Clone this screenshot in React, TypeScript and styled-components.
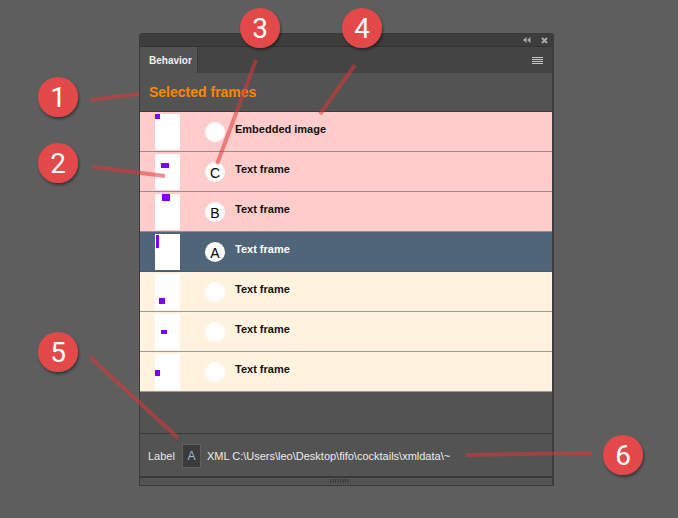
import React from "react";
import styled, { createGlobalStyle } from "styled-components";

const Global = createGlobalStyle`
  html, body { margin: 0; padding: 0; background: #5e5e5e; }
  body { font-family: "Liberation Sans", Arial, sans-serif; }
`;

const Page = styled.div`
  position: relative;
  width: 678px;
  height: 518px;
  padding: 33px 0 0 139px;
  box-sizing: border-box;
  overflow: hidden;
`;

const Panel = styled.div`
  width: 412px;
  border-style: solid;
  border-color: #3b3b3b;
  border-width: 1px 2px 1px 1px;
  border-radius: 3px 3px 0 0;
  background: #535353;
  display: flex;
  flex-direction: column;
`;

const TitleBar = styled.div`
  height: 12px;
  background: #3d3d3d;
  border-bottom: 1px solid #333333;
  display: flex;
  align-items: center;
  justify-content: flex-end;
  gap: 10px;
  padding-right: 4px;
  border-radius: 2px 2px 0 0;
`;

const TabStrip = styled.div`
  height: 26px;
  background: #444444;
  display: flex;
  align-items: stretch;
`;

const Tab = styled.div`
  width: 58px;
  padding-left: 9px;
  box-sizing: border-box;
  background: #535353;
  border-right: 1px solid #3a3a3a;
  color: #f0f0f0;
  font-weight: bold;
  font-size: 10px;
  display: flex;
  align-items: center;
  padding-top: 1px;
`;

const Spacer = styled.div`
  flex: 1;
`;

const MenuButton = styled.div`
  width: 20px;
  display: flex;
  align-items: center;
  justify-content: flex-start;
  padding-top: 1px;
`;

const Header = styled.div`
  height: 38px;
  border-bottom: 1px solid #3c3c3c;
  display: flex;
  align-items: center;
  padding-left: 9px;
  color: #ff8500;
  font-weight: bold;
  font-size: 14px;
`;

const List = styled.div`
  display: flex;
  flex-direction: column;
`;

const Row = styled.div<{ $bg: string; $line: string }>`
  height: 40px;
  box-sizing: border-box;
  border-bottom: 1px solid ${(p) => p.$line};
  background: ${(p) => p.$bg};
  display: flex;
  align-items: flex-start;
  padding-left: 15px;
`;

const Thumb = styled.div`
  position: relative;
  width: 25px;
  height: 36px;
  margin-top: 2px;
  background: #ffffff;
  flex: none;
`;

const Marker = styled.div`
  position: absolute;
  background: #8000ff;
`;

const Badge = styled.div`
  width: 20px;
  height: 20px;
  border-radius: 50%;
  background: #ffffff;
  margin: 10px 0 0 25px;
  flex: none;
  display: flex;
  align-items: center;
  justify-content: center;
  color: #000;
  font-size: 14px;
  line-height: 1;
  padding-top: 1px;
  box-sizing: border-box;
`;

const RowLabel = styled.div<{ $sel: boolean }>`
  margin: 10px 0 0 10px;
  line-height: 14px;
  font-size: 11px;
  font-weight: bold;
  color: ${(p) => (p.$sel ? "#ffffff" : "#111111")};
`;

const Empty = styled.div`
  height: 41px;
`;

const Footer = styled.div`
  height: 41px;
  border-top: 1px solid #3a3a3a;
  display: flex;
  align-items: center;
  padding-left: 8px;
  padding-top: 1px;
  font-size: 11px;
  color: #e6e6e6;
`;

const FooterLabel = styled.span`
  margin-right: 7px;
`;

const LabelBox = styled.div`
  width: 19px;
  height: 24px;
  box-sizing: border-box;
  background: #3b3b3b;
  border: 1px solid #606060;
  color: #9fb6cf;
  display: flex;
  align-items: center;
  justify-content: center;
  font-size: 12px;
  margin-right: 6px;
`;

const PathText = styled.span`
  color: #ececec;
  white-space: nowrap;
`;

const GripBar = styled.div`
  height: 6px;
  border-top: 2px solid #393939;
  display: flex;
  justify-content: center;
  align-items: flex-start;
  padding-top: 1px;
  padding-right: 12px;
`;

const Overlay = styled.svg`
  position: absolute;
  left: 0;
  top: 0;
  pointer-events: none;
`;

type RowData = {
  kind: "pink" | "sel" | "cream";
  letter?: string;
  label: string;
  m: [number, number, number, number];
};

const rows: RowData[] = [
  { kind: "pink", label: "Embedded image", m: [0, 0, 5, 5] },
  { kind: "pink", letter: "C", label: "Text frame", m: [6, 9, 8, 5] },
  { kind: "pink", letter: "B", label: "Text frame", m: [7, 0, 8, 7] },
  { kind: "sel", letter: "A", label: "Text frame", m: [1, 1, 3, 13] },
  { kind: "cream", label: "Text frame", m: [4, 24, 6, 6] },
  { kind: "cream", label: "Text frame", m: [6, 16, 6, 4] },
  { kind: "cream", label: "Text frame", m: [0, 16, 5, 6] },
];

const bgOf = { pink: "#ffcccc", sel: "#506579", cream: "#fff2df" };
const lineOf = { pink: "#9a8c8c", sel: "#4a5a6a", cream: "#a09a94" };

const callouts = [
  { n: "1", x: 58, y: 97, line: [90, 100, 139, 94] },
  { n: "2", x: 58, y: 163, line: [93, 167, 165, 176] },
  { n: "3", x: 260, y: 28, line: [256, 60, 217, 164] },
  { n: "4", x: 362, y: 28, line: [355, 65, 320, 114] },
  { n: "5", x: 58, y: 352, line: [90, 357, 178, 438] },
  { n: "6", x: 623, y: 455, line: [466, 455, 592, 453] },
];

export default function App() {
  return (
    <>
      <Global />
      <Page>
        <Panel>
          <TitleBar>
            <svg width="8" height="6" viewBox="0 0 8 6">
              <path d="M0 3 L3.5 0 V6 Z M4 3 L7.5 0 V6 Z" fill="#a8a8a8" />
            </svg>
            <svg width="7" height="7" viewBox="0 0 7 7">
              <path d="M1 1 L6 6 M6 1 L1 6" stroke="#a8a8a8" strokeWidth="2" />
            </svg>
          </TitleBar>
          <TabStrip>
            <Tab>Behavior</Tab>
            <Spacer />
            <MenuButton>
              <svg width="11" height="8" viewBox="0 0 11 8">
                <path d="M0 0.5 H11 M0 2.5 H11 M0 4.5 H11 M0 6.5 H11" stroke="#c6c6c6" strokeWidth="1" />
              </svg>
            </MenuButton>
          </TabStrip>
          <Header>Selected frames</Header>
          <List>
            {rows.map((r, i) => (
              <Row key={i} $bg={bgOf[r.kind]} $line={lineOf[r.kind]}>
                <Thumb>
                  <Marker style={{ left: r.m[0], top: r.m[1], width: r.m[2], height: r.m[3] }} />
                </Thumb>
                <Badge>{r.letter ?? ""}</Badge>
                <RowLabel $sel={r.kind === "sel"}>{r.label}</RowLabel>
              </Row>
            ))}
          </List>
          <Empty />
          <Footer>
            <FooterLabel>Label</FooterLabel>
            <LabelBox>A</LabelBox>
            <PathText>XML C:\Users\leo\Desktop\fifo\cocktails\xmldata\~</PathText>
          </Footer>
          <GripBar>
            <svg width="20" height="4" viewBox="0 0 20 4">
              {Array.from({ length: 8 }).map((_, i) => (
                <rect key={i} x={i * 2.5} y={0} width={1} height={4} fill="#393939" />
              ))}
            </svg>
          </GripBar>
        </Panel>
        <Overlay width={678} height={518} viewBox="0 0 678 518">
          <defs>
            <filter id="sh" x="-30%" y="-30%" width="160%" height="160%">
              <feDropShadow dx="1" dy="2" stdDeviation="1.5" floodColor="#000" floodOpacity="0.45" />
            </filter>
          </defs>
          {callouts.map((c) => (
            <line
              key={"l" + c.n}
              x1={c.line[0]}
              y1={c.line[1]}
              x2={c.line[2]}
              y2={c.line[3]}
              stroke="rgba(222,52,52,0.55)"
              strokeWidth={4}
            />
          ))}
          {callouts.map((c) => (
            <g key={"c" + c.n}>
              <circle cx={c.x} cy={c.y} r={20} fill="#e34848" filter="url(#sh)" />
              <text
                x={c.x}
                y={c.y + 10}
                textAnchor="middle"
                fill="#ffffff"
                fontFamily="Roboto, 'Open Sans', sans-serif"
                fontSize="28"
              >
                {c.n}
              </text>
            </g>
          ))}
        </Overlay>
      </Page>
    </>
  );
}
